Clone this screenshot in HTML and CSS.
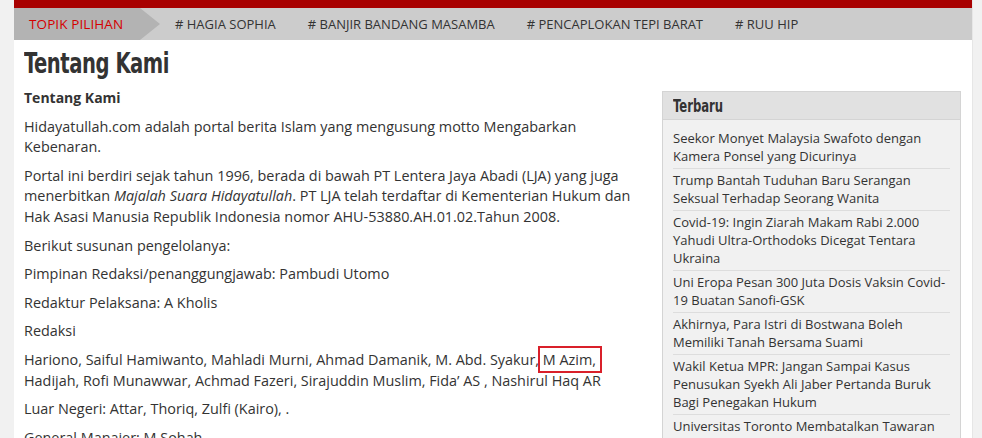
FILE: index.html
```html
<!DOCTYPE html>
<html lang="id">
<head>
  <meta charset="UTF-8">
  <meta name="viewport" content="width=device-width, initial-scale=1.0">
  <title>Tentang Kami - Hidayatullah.com</title>
  <link rel="stylesheet" href="styles.css">
</head>
<body>
  <div class="wrap">
    <div class="topbar"></div>
    <nav class="topics">
      <span class="topics-label">TOPIK PILIHAN</span>
      <a href="#" class="topic">#&nbsp;HAGIA SOPHIA</a>
      <a href="#" class="topic">#&nbsp;BANJIR BANDANG MASAMBA</a>
      <a href="#" class="topic">#&nbsp;PENCAPLOKAN TEPI BARAT</a>
      <a href="#" class="topic">#&nbsp;RUU HIP</a>
    </nav>

    <div class="main">
      <article class="content">
        <h1 class="page-title">Tentang Kami</h1>
        <p class="lead">Tentang Kami</p>
        <p>Hidayatullah.com adalah portal berita Islam yang mengusung motto Mengabarkan Kebenaran.</p>
        <p>Portal ini berdiri sejak tahun 1996, berada di bawah PT Lentera Jaya Abadi (LJA) yang juga menerbitkan <em>Majalah Suara Hidayatullah</em>. PT LJA telah terdaftar di Kementerian Hukum dan Hak Asasi Manusia Republik Indonesia nomor AHU-53880.AH.01.02.Tahun 2008.</p>
        <p>Berikut susunan pengelolanya:</p>
        <p>Pimpinan Redaksi/penanggungjawab: Pambudi Utomo</p>
        <p>Redaktur Pelaksana: A Kholis</p>
        <p>Redaksi</p>
        <p>Hariono, Saiful Hamiwanto, Mahladi Murni, Ahmad Damanik, M. Abd. Syakur, <span class="mark">M Azim,</span> Hadijah, Rofi Munawwar, Achmad Fazeri, Sirajuddin Muslim, Fida&rsquo; AS , Nashirul Haq AR</p>
        <p>Luar Negeri: Attar, Thoriq, Zulfi (Kairo), .</p>
        <p>General Manajer: M Sohah</p>
      </article>

      <aside class="sidebar">
        <div class="widget">
          <h3 class="widget-title"><span>Terbaru</span></h3>
          <ul class="news">
            <li><a href="#">Seekor Monyet Malaysia Swafoto dengan Kamera Ponsel yang Dicurinya</a></li>
            <li><a href="#">Trump Bantah Tuduhan Baru Serangan Seksual Terhadap Seorang Wanita</a></li>
            <li><a href="#">Covid-19: Ingin Ziarah Makam Rabi 2.000 Yahudi Ultra-Orthodoks Dicegat Tentara Ukraina</a></li>
            <li><a href="#">Uni Eropa Pesan 300 Juta Dosis Vaksin Covid-19 Buatan Sanofi-GSK</a></li>
            <li><a href="#">Akhirnya, Para Istri di Bostwana Boleh Memiliki Tanah Bersama Suami</a></li>
            <li><a href="#">Wakil Ketua MPR: Jangan Sampai Kasus Penusukan Syekh Ali Jaber Pertanda Buruk Bagi Penegakan Hukum</a></li>
            <li><a href="#">Universitas Toronto Membatalkan Tawaran Pekerjaan kepada Akademisi Pro-Palestina</a></li>
          </ul>
        </div>
      </aside>
    </div>
  </div>
</body>
</html>
```

FILE: styles.css
```css
body {
  margin: 0;
  background: #f1f1f1;
  font-family: 'Open Sans', 'Noto Sans', sans-serif;
  color: #333;
  overflow: hidden;
}

.wrap {
  width: 958px;
  margin-left: 14px;
  background: #fff;
  border-right: 1px solid #e6e6e6;
  min-height: 100vh;
}

.topbar {
  height: 8px;
  background: #a80000;
}

/* topic strip */
.topics {
  display: flex;
  align-items: center;
  height: 32px;
  background: #cccccc;
}

.topics-label {
  position: relative;
  display: flex;
  align-items: center;
  height: 32px;
  width: 111px;
  padding-left: 15px;
  background: #b3b3b3;
  color: #d50000;
  font-size: 13.5px;
  letter-spacing: 0.1px;
  margin-right: 35px;
}

.topics-label::after {
  content: "";
  position: absolute;
  top: 0;
  right: -20px;
  border-top: 16px solid transparent;
  border-bottom: 16px solid transparent;
  border-left: 20px solid #b3b3b3;
}

.topic {
  color: #333;
  text-decoration: none;
  font-size: 13px;
  margin-right: 32px;
  letter-spacing: 0;
}

/* main layout */
.main {
  display: flex;
  padding: 0 10px;
}

.content {
  width: 616px;
}

.page-title {
  font-family: 'Liberation Sans Narrow', 'DejaVu Sans Condensed', sans-serif;
  font-weight: bold;
  font-size: 29px;
  letter-spacing: -0.6px;
  color: #333;
  margin: 6px 0 8px;
  line-height: 34px;
  transform: scaleX(0.75);
  transform-origin: left center;
}

.content p {
  font-size: 14.4px;
  line-height: 20.6px;
  margin: 0 0 8px;
}

.content p.lead {
  font-weight: bold;
  font-size: 14px;
  margin-bottom: 8px;
}

.mark {
  outline: 2px solid #d9202a;
  outline-offset: 1px;
  padding: 1px 3px 1px 2px;
  margin: 0 -3px 0 -2px;
}

/* sidebar */
.sidebar {
  width: 299px;
  margin-left: 22px;
  margin-top: 51px;
}

.widget {
  border: 1px solid #d4d4d4;
  background: #f1f1f1;
}

.widget-title {
  margin: 0;
  height: 27px;
  line-height: 27px;
  padding-left: 10px;
  background: #e1e1e1;
  border-bottom: 1px solid #d4d4d4;
  font-family: 'Liberation Sans Narrow', 'DejaVu Sans Condensed', sans-serif;
  font-size: 18px;
  font-weight: bold;
  color: #333;
}

.widget-title span {
  display: inline-block;
  transform: scaleX(0.72);
  transform-origin: left center;
}

.news {
  list-style: none;
  margin: 0;
  padding: 7px 10px 0;
}

.news li {
  border-bottom: 1px solid #dddddd;
  padding: 2px 0 3px;
  font-size: 13px;
  line-height: 18px;
}

.news a {
  color: #333;
  text-decoration: none;
}
```
